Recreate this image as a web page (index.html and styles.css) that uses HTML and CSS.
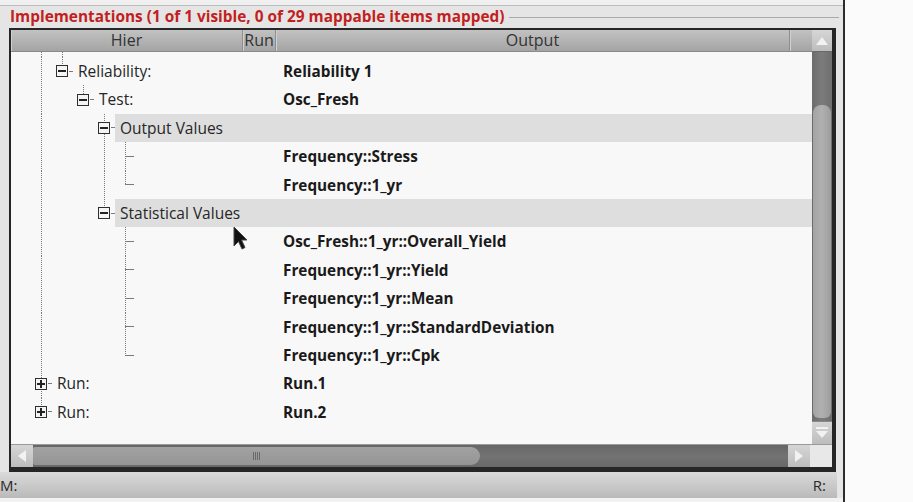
FILE: index.html
```html
<!DOCTYPE html>
<html>
<head>
<meta charset="utf-8">
<link rel="stylesheet" href="styles.css">
</head>
<body>
<div class="screen">
  <div class="window">
    <div class="topstrip"></div>
    <div class="group">
      <div class="group-title">
        <span class="title-text">Implementations (1 of 1 visible, 0 of 29 mappable items mapped)</span>
        <span class="title-rule"></span>
      </div>
      <div class="frame">
        <div class="upper">
          <div class="view">
            <div class="header">
              <div class="hcell">Hier</div>
              <div class="hcell">Run</div>
              <div class="hcell">Output</div>
              <div class="hcell pad"></div>
            </div>
            <div class="rows">
              <div class="row spacer">
                <div class="hier"><span class="g line"></span><span class="g line"></span></div>
                <div></div><div></div>
              </div>
              <div class="row">
                <div class="hier"><span class="g line"></span><span class="g exp up"><i class="box minus"></i></span><span class="label">Reliability:</span></div>
                <div class="run"></div><div class="out">Reliability 1</div>
              </div>
              <div class="row">
                <div class="hier"><span class="g line"></span><span class="g"></span><span class="g exp up"><i class="box minus"></i></span><span class="label">Test:</span></div>
                <div class="run"></div><div class="out">Osc_Fresh</div>
              </div>
              <div class="row hl">
                <div class="hier"><span class="g line"></span><span class="g"></span><span class="g"></span><span class="g exp up down"><i class="box minus"></i></span><span class="label">Output Values</span></div>
                <div class="run"></div><div class="out"></div>
              </div>
              <div class="row">
                <div class="hier"><span class="g line"></span><span class="g"></span><span class="g"></span><span class="g line"></span><span class="g leaf"></span></div>
                <div class="run"></div><div class="out">Frequency::Stress</div>
              </div>
              <div class="row">
                <div class="hier"><span class="g line"></span><span class="g"></span><span class="g"></span><span class="g line"></span><span class="g leaf last"></span></div>
                <div class="run"></div><div class="out">Frequency::1_yr</div>
              </div>
              <div class="row hl">
                <div class="hier"><span class="g line"></span><span class="g"></span><span class="g"></span><span class="g exp up"><i class="box minus"></i></span><span class="label">Statistical Values</span></div>
                <div class="run"></div><div class="out"></div>
              </div>
              <div class="row">
                <div class="hier"><span class="g line"></span><span class="g"></span><span class="g"></span><span class="g"></span><span class="g leaf"></span></div>
                <div class="run"></div><div class="out">Osc_Fresh::1_yr::Overall_Yield</div>
              </div>
              <div class="row">
                <div class="hier"><span class="g line"></span><span class="g"></span><span class="g"></span><span class="g"></span><span class="g leaf"></span></div>
                <div class="run"></div><div class="out">Frequency::1_yr::Yield</div>
              </div>
              <div class="row">
                <div class="hier"><span class="g line"></span><span class="g"></span><span class="g"></span><span class="g"></span><span class="g leaf"></span></div>
                <div class="run"></div><div class="out">Frequency::1_yr::Mean</div>
              </div>
              <div class="row">
                <div class="hier"><span class="g line"></span><span class="g"></span><span class="g"></span><span class="g"></span><span class="g leaf"></span></div>
                <div class="run"></div><div class="out">Frequency::1_yr::StandardDeviation</div>
              </div>
              <div class="row">
                <div class="hier"><span class="g line"></span><span class="g"></span><span class="g"></span><span class="g"></span><span class="g leaf last"></span></div>
                <div class="run"></div><div class="out">Frequency::1_yr::Cpk</div>
              </div>
              <div class="row">
                <div class="hier"><span class="g exp up down"><i class="box plus"></i></span><span class="label">Run:</span></div>
                <div class="run"></div><div class="out">Run.1</div>
              </div>
              <div class="row">
                <div class="hier"><span class="g exp up"><i class="box plus"></i></span><span class="label">Run:</span></div>
                <div class="run"></div><div class="out">Run.2</div>
              </div>
            </div>
          </div>
          <div class="vscroll">
            <div class="sbtn">
              <svg width="14" height="10" viewBox="0 0 14 10"><path d="M7 1 L13 9 L1 9 Z" fill="#f2f2f2"/></svg>
            </div>
            <div class="vtrack"><div class="vthumb"></div></div>
            <div class="sbtn down">
              <svg width="14" height="12" viewBox="0 0 14 12"><rect x="1" y="0" width="12" height="2" fill="#f2f2f2"/><path d="M1 4 L13 4 L7 11 Z" fill="#f2f2f2"/></svg>
            </div>
          </div>
        </div>
        <div class="hscroll">
          <div class="sbtn">
            <svg width="10" height="14" viewBox="0 0 10 14"><path d="M1 7 L9 1 L9 13 Z" fill="#f2f2f2"/></svg>
          </div>
          <div class="htrack"><div class="hthumb"><span class="grip"></span></div></div>
          <div class="sbtn">
            <svg width="10" height="14" viewBox="0 0 10 14"><path d="M9 7 L1 1 L1 13 Z" fill="#f2f2f2"/></svg>
          </div>
          <div class="corner"></div>
        </div>
      </div>
    </div>
    <div class="status"><span>M:</span><span>R:</span></div>
    <div class="foot"></div>
  </div>
  <div class="desk"></div>
  <svg class="cursor" width="16" height="26" viewBox="0 0 16 26"><path d="M1 1 L1 20 L5.5 15.5 L9 23 L12 21.5 L8.5 14 L14 14 Z" fill="#111" stroke="#444" stroke-width="1"/></svg>
</div>
</body>
</html>
```

FILE: styles.css
```css
* { box-sizing: border-box; }
html, body { margin: 0; padding: 0; }
body {
  width: 913px;
  height: 502px;
  overflow: hidden;
  background: #fafafa;
  font-family: "Open Sans", "Noto Sans", sans-serif;
  font-size: 15.5px;
  color: #2b2b2b;
}
.screen { position: relative; display: flex; height: 502px; }
.window {
  width: 845px;
  height: 502px;
  flex: none;
  background: #e5e5e5;
  border-right: 2px solid #2c2c2c;
  display: flex;
  flex-direction: column;
}
.desk { flex: 1; background: #fbfbfb; }

.topstrip {
  height: 6px;
  background: #f0f0f0;
  border-bottom: 1px solid #bcbcbc;
}
.group { padding: 0 7px 0 9px; }
.group-title {
  height: 22px;
  display: flex;
  align-items: center;
  padding-left: 1px;
}
.title-text {
  color: #c21f22;
  font-weight: 700;
  white-space: nowrap;
  line-height: 22px;
  font-size: 15.4px;
}
.title-rule {
  flex: 1;
  height: 1px;
  background: #aaaaaa;
  margin: 0 -3px 0 5px;
}
.frame {
  height: 444px;
  border: 2px solid #262626;
  border-right-width: 4px;
  border-bottom-width: 5px;
  display: flex;
  flex-direction: column;
}
.upper {
  height: 414px;
  display: grid;
  grid-template-columns: 801px 20px;
}
.view {
  display: flex;
  flex-direction: column;
  background: #f8f8f8;
  overflow: hidden;
}
.header {
  height: 22px;
  flex: none;
  display: grid;
  grid-template-columns: 232px 33px 514px 22px;
  background: linear-gradient(#c2c2c2, #a4a4a4);
  border-bottom: 1px solid #8a8a8a;
}
.hcell {
  text-align: center;
  line-height: 21px;
  color: #333;
  font-size: 16px;
  border-right: 1px solid #8e8e8e;
  box-shadow: inset 1px 0 0 #d0d0d0;
}
.hcell.pad { border-right: none; }

.rows { flex: 1; overflow: hidden; }
.row {
  height: 28.4px;
  line-height: 28.4px;
  display: grid;
  grid-template-columns: 232px 33px 1fr;
  white-space: nowrap;
}
.row.spacer { height: 5px; line-height: 5px; }
.hier {
  display: flex;
  height: 100%;
  padding-left: 20px;
}
.g {
  width: 21px;
  flex: none;
  height: 100%;
  display: flex;
  align-items: center;
  justify-content: center;
}
.g.line {
  background: repeating-linear-gradient(to bottom, #7a7a7a 0 1px, transparent 1px 2px) no-repeat 10px 0 / 1px 100%;
}
.g.leaf {
  background:
    linear-gradient(#7a7a7a, #7a7a7a) no-repeat 10px 50% / 9px 1px,
    repeating-linear-gradient(to bottom, #7a7a7a 0 1px, transparent 1px 2px) no-repeat 10px 0 / 1px 100%;
}
.g.leaf.last {
  background:
    linear-gradient(#7a7a7a, #7a7a7a) no-repeat 10px 50% / 9px 1px,
    repeating-linear-gradient(to bottom, #7a7a7a 0 1px, transparent 1px 2px) no-repeat 10px 0 / 1px 50%;
}
.g.exp.up {
  background:
    linear-gradient(#7a7a7a, #7a7a7a) no-repeat 17px 50% / 4px 1px,
    repeating-linear-gradient(to bottom, #7a7a7a 0 1px, transparent 1px 2px) no-repeat 10px 0 / 1px 50%;
}
.g.exp.up.down {
  background:
    linear-gradient(#7a7a7a, #7a7a7a) no-repeat 17px 50% / 4px 1px,
    repeating-linear-gradient(to bottom, #7a7a7a 0 1px, transparent 1px 2px) no-repeat 10px 0 / 1px 100%;
}
.box {
  width: 12px;
  height: 12px;
  border: 1px solid #2e2e2e;
  background: #f4f4f4;
  display: grid;
  place-items: center;
  margin-left: -1px;
}
.box::before, .box::after {
  content: "";
  grid-area: 1 / 1;
  background: #222;
}
.box::before { width: 8px; height: 2px; }
.box.plus::after { width: 2px; height: 8px; }
.box.minus::after { display: none; }

.label {
  padding-left: 5px;
  color: #262626;
}
.row.hl .label { flex: 1; background: #dedede; }
.row.hl .run, .row.hl .out { background: #dedede; }
.out {
  padding-left: 7px;
  font-weight: 700;
  font-size: 15.3px;
  color: #1a1a1a;
}

.vscroll {
  display: flex;
  flex-direction: column;
  background: #767676;
}
.sbtn {
  height: 22px;
  flex: none;
  background: linear-gradient(#d6d6d6, #bdbdbd);
  display: flex;
  align-items: center;
  justify-content: center;
  border-bottom: 1px solid #6a6a6a;
}
.vscroll .sbtn.down { height: 23px; border-top: 1px solid #8a8a8a; border-bottom: none; }
.vtrack {
  flex: 1;
  background: linear-gradient(90deg, #6c6c6c, #7c7c7c 50%, #6e6e6e);
  padding: 53px 1px 3px;
}
.vthumb {
  height: 313px;
  border-radius: 8px 8px 6px 6px;
  background: linear-gradient(90deg, #a3a3a3, #b0b0b0 50%, #9d9d9d);
}

.hscroll {
  height: 23px;
  display: grid;
  grid-template-columns: 22px 755px 22px 22px;
  background: #6f6f6f;
  border-top: 1px solid #9a9a9a;
}
.hscroll .sbtn { height: 100%; border-bottom: none; }
.htrack {
  background: linear-gradient(#666, #737373 50%, #686868);
  padding: 2px 0;
}
.hthumb {
  width: 447px;
  height: 100%;
  border-radius: 2px 9px 9px 2px;
  background: linear-gradient(#a2a2a2, #959595);
  display: flex;
  align-items: center;
  justify-content: center;
}
.grip {
  width: 7px;
  height: 8px;
  background: repeating-linear-gradient(90deg, #6a6a6a 0 1px, transparent 1px 2px);
}
.corner { background: #e8e8e8; }

.status {
  height: 26px;
  width: 837px;
  background: linear-gradient(#dadada, #bababa);
  display: flex;
  justify-content: space-between;
  align-items: center;
  padding: 0 11px 0 0;
  color: #2a2a2a;
  font-size: 15px;
}
.foot { flex: 1; background: #f2f2f2; }

.cursor { position: absolute; left: 233px; top: 226px; }
```
